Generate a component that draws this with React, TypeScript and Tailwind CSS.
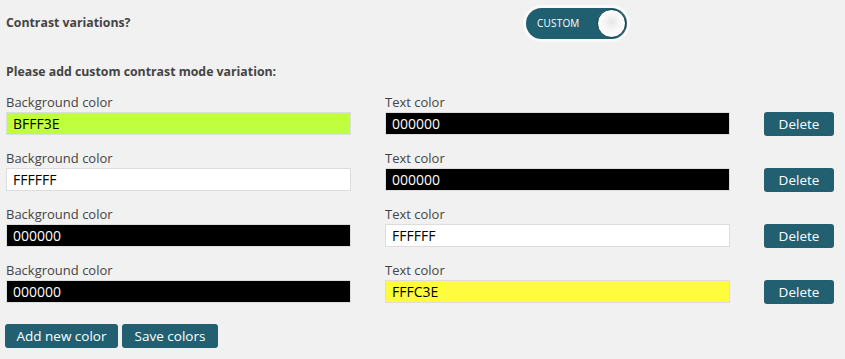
import React, { useState } from 'react';

type Variation = { id: number; bg: string; text: string };

const swatch = (hex: string) => '#' + hex;

const ColorField: React.FC<{ label: string; value: string; fg: string }> = ({ label, value, fg }) => (
  <div className="flex flex-col w-[345px]">
    <label className="text-[13px] leading-[18px] text-[#444] mb-[1px]">{label}</label>
    <input
      readOnly
      value={value}
      className="h-[23px] border border-[#dddddd] px-[6px] text-[14px] outline-none"
      style={{ backgroundColor: swatch(value), color: swatch(fg) }}
    />
  </div>
);

const App: React.FC = () => {
  const [variations] = useState<Variation[]>([
    { id: 1, bg: 'BFFF3E', text: '000000' },
    { id: 2, bg: 'FFFFFF', text: '000000' },
    { id: 3, bg: '000000', text: 'FFFFFF' },
    { id: 4, bg: '000000', text: 'FFFC3E' },
  ]);

  const contrastOf = (hex: string) => {
    const n = parseInt(hex, 16);
    const r = (n >> 16) & 255, g = (n >> 8) & 255, b = n & 255;
    return r * 0.299 + g * 0.587 + b * 0.114 > 128 ? '000000' : 'FFFFFF';
  };

  return (
    <div className="min-h-screen w-[845px] h-[359px] bg-[#f1f1f1] text-[#444] font-['Open_Sans',sans-serif] pl-[6px] pt-[8px]">
      <div className="flex items-center h-[31px]">
        <div className="w-[520px] text-[12.3px] font-bold">Contrast variations?</div>
        <div className="rounded-full shadow-[0_0_0_3px_#fafafa] bg-[#205f70] w-[101px] h-[31px] flex items-center justify-between pl-[11px] pr-[1px]">
          <span className="text-[10px] text-white tracking-[0.2px]">CUSTOM</span>
          <span className="w-[29px] h-[29px] rounded-full bg-[radial-gradient(circle_at_50%_45%,#e6e6e6_0%,#f6f6f6_35%,#ffffff_70%)] border border-[#1c3f48]" />
        </div>
      </div>

      <div className="mt-[24px] text-[12.3px] font-bold leading-[18px]">Please add custom contrast mode variation:</div>

      <div className="mt-[12px] flex flex-col gap-[14px]">
        {variations.map(v => (
          <div key={v.id} className="flex items-end">
            <ColorField label="Background color" value={v.bg} fg={contrastOf(v.bg)} />
            <div className="ml-[34px]">
              <ColorField label="Text color" value={v.text} fg={contrastOf(v.text)} />
            </div>
            <button className="ml-[34px] mb-[-1px] w-[70px] h-[24px] rounded-[3px] bg-[#225f70] text-white text-[13.5px]">Delete</button>
          </div>
        ))}
      </div>

      <div className="mt-[21px] flex gap-[4px] -ml-[1px]">
        <button className="w-[113px] h-[24px] rounded-[3px] bg-[#225f70] text-white text-[13.5px]">Add new color</button>
        <button className="w-[96px] h-[24px] rounded-[3px] bg-[#225f70] text-white text-[13.5px]">Save colors</button>
      </div>
    </div>
  );
};

export default App;
